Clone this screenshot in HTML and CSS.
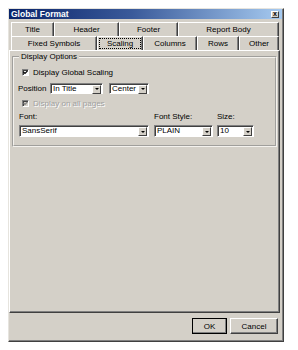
FILE: index.html
```html
<!DOCTYPE html>
<html lang="en">
<head>
  <meta charset="UTF-8">
  <title>Global Format</title>
  <link rel="stylesheet" href="styles.css">
</head>
<body>

<div class="dialog">
  <div class="titlebar">
    <span class="title">Global Format</span>
    <span class="close">x</span>
  </div>

  <div class="tabs">
    <div class="tab-row">
      <div class="tab tab-title">Title</div>
      <div class="tab tab-header">Header</div>
      <div class="tab tab-footer">Footer</div>
      <div class="tab tab-body">Report Body</div>
    </div>
    <div class="tab-row">
      <div class="tab tab-fixed">Fixed Symbols</div>
      <div class="tab tab-scaling active"><span class="focus">Scaling</span></div>
      <div class="tab tab-columns">Columns</div>
      <div class="tab tab-rows">Rows</div>
      <div class="tab tab-other">Other</div>
    </div>
  </div>

  <div class="panel">
    <fieldset class="group">
      <legend>Display Options</legend>

      <div class="check-row first">
        <span class="checkbox"><svg width="5" height="5" viewBox="0 0 5 5"><path d="M0.5 2 L2 3.5 L4.5 0.8" fill="none" stroke="#000" stroke-width="1.2"/></svg></span>
        <span>Display Global Scaling</span>
      </div>

      <div class="position-row">
        <span class="pos-label">Position</span>
        <div class="combo combo-pos"><span class="value">In Title</span><span class="arrow"></span></div>
        <div class="combo combo-align"><span class="value">Center</span><span class="arrow"></span></div>
      </div>

      <div class="check-row disabled">
        <span class="checkbox"><svg width="5" height="5" viewBox="0 0 5 5"><path d="M0.5 2 L2 3.5 L4.5 0.8" fill="none" stroke="#808080" stroke-width="1.2"/></svg></span>
        <span>Display on all pages</span>
      </div>

      <div class="font-row">
        <div class="field field-font">
          <span class="field-label">Font:</span>
          <div class="combo"><span class="value">SansSerif</span><span class="arrow"></span></div>
        </div>
        <div class="field field-style">
          <span class="field-label">Font Style:</span>
          <div class="combo"><span class="value">PLAIN</span><span class="arrow"></span></div>
        </div>
        <div class="field field-size">
          <span class="field-label">Size:</span>
          <div class="combo"><span class="value">10</span><span class="arrow"></span></div>
        </div>
      </div>
    </fieldset>
  </div>

  <div class="footer">
    <button class="btn btn-ok">OK</button>
    <button class="btn btn-cancel">Cancel</button>
  </div>
</div>

</body>
</html>
```

FILE: styles.css
```css
/* Boite de dialogue style Windows classique */

* {
  box-sizing: border-box;
}

body {
  margin: 0;
  background-color: #fff;
  font-family: "Liberation Sans", Arial, sans-serif;
  font-size: 8px;
  color: #000;
}

.dialog {
  width: 276px;
  height: 334px;
  margin: 8px 0 0 8px;
  background-color: #d4d0c8;
  border: 1px solid;
  border-color: #e6e4de #404040 #404040 #e6e4de;
  box-shadow: inset -1px -1px #808080;
  display: flex;
  flex-direction: column;
}

.titlebar {
  height: 10px;
  margin-right: 1px;
  display: flex;
  align-items: center;
  justify-content: space-between;
  background: linear-gradient(to right, #0a246a, #3a5a9a 45%, #a6caf0);
  padding: 0 3px 0 2px;
}

.title {
  color: #fff;
  font-weight: bold;
  font-size: 8.5px;
  line-height: 10px;
}

.close {
  width: 8px;
  height: 7px;
  background-color: #d4d0c8;
  border: 1px solid;
  border-color: #fff #404040 #404040 #fff;
  font-size: 7px;
  font-weight: bold;
  line-height: 4px;
  text-align: center;
}

/* Onglets */

.tabs {
  margin-top: 3px;
  padding-left: 2px;
}

.tab-row {
  display: flex;
  width: 268px;
  height: 14px;
}

.tab {
  height: 14px;
  line-height: 13px;
  text-align: center;
  border-top: 1px solid #fff;
  border-left: 1px solid #fff;
  border-right: 1px solid #404040;
  box-shadow: inset -1px 0 #808080;
}

.tab-title { width: 43px; }
.tab-header { width: 65px; }
.tab-footer { width: 59px; }
.tab-body { width: 101px; }

.tab-fixed { width: 86px; }
.tab-scaling { width: 46px; }
.tab-columns { width: 54px; }
.tab-rows { width: 42px; }
.tab-other { width: 40px; }

.tab.active {
  padding: 1px 1px 0 1px;
}

.focus {
  display: block;
  height: 11px;
  line-height: 10px;
  border: 1px dotted #000;
}

/* Panneau */

.panel {
  height: 263px;
  width: 271px;
  border: 1px solid;
  border-color: #fff #404040 #404040 #fff;
  box-shadow: inset -1px -1px #808080;
  padding: 2px 2px 0 2px;
}

.group {
  margin: 0;
  width: 265px;
  height: 94px;
  padding: 0 0 0 4px;
  border: 2px groove #f4f2ee;
  display: flex;
  flex-direction: column;
}

.group legend {
  padding: 0 2px;
  margin-left: 1px;
  line-height: 8px;
  font-size: 8px;
}

.check-row {
  display: flex;
  align-items: center;
  gap: 4px;
  height: 10px;
  margin-left: 4px;
  margin-top: 4px;
}

.check-row.first {
  margin-top: 6px;
}

.checkbox {
  width: 7px;
  height: 7px;
  background-color: #fff;
  border: 1px solid;
  border-color: #808080 #fff #fff #808080;
  box-shadow: inset 1px 1px #404040;
  display: flex;
  align-items: center;
  justify-content: center;
}

.check-row.disabled {
  color: #a0a0a0;
  text-shadow: 1px 1px #fff;
}

.check-row.disabled .checkbox {
  background-color: #d4d0c8;
}

.position-row {
  display: flex;
  align-items: center;
  height: 11px;
  margin-top: 6px;
}

.pos-label {
  width: 32px;
}

.combo {
  height: 11px;
  background-color: #fff;
  border: 1px solid;
  border-color: #808080 #fff #fff #808080;
  box-shadow: inset 1px 1px #404040;
  display: flex;
  align-items: center;
  justify-content: space-between;
  padding: 1px 1px 1px 2px;
}

.combo .value {
  line-height: 8px;
}

.combo-pos {
  width: 53px;
}

.combo-align {
  width: 40px;
  margin-left: 6px;
}

.arrow {
  width: 9px;
  height: 9px;
  margin-top: 1px;
  background-color: #d4d0c8;
  border: 1px solid;
  border-color: #fff #404040 #404040 #fff;
  display: flex;
  align-items: center;
  justify-content: center;
}

.arrow::after {
  content: "";
  border-left: 2px solid transparent;
  border-right: 2px solid transparent;
  border-top: 2px solid #000;
}

.font-row {
  display: flex;
  margin-top: 4px;
  margin-left: 1px;
}

.field {
  display: flex;
  flex-direction: column;
  gap: 4px;
}

.field-label {
  line-height: 9px;
}

.field .combo {
  height: 12px;
}

.field-font { width: 130px; }
.field-style { width: 59px; margin-left: 5px; }
.field-size { width: 37px; margin-left: 4px; }

/* Boutons */

.footer {
  flex: 1;
  display: flex;
  justify-content: flex-end;
  gap: 3px;
  padding: 5px 5px 0 0;
}

.btn {
  height: 16px;
  background-color: #d4d0c8;
  border: 1px solid;
  border-color: #fff #404040 #404040 #fff;
  box-shadow: inset -1px -1px #808080;
  font-family: "Liberation Sans", Arial, sans-serif;
  font-size: 8px;
  color: #000;
  padding: 0;
}

.btn-ok {
  width: 35px;
  outline: 1px solid #000;
  outline-offset: -1px;
}

.btn-cancel {
  width: 48px;
}
```
